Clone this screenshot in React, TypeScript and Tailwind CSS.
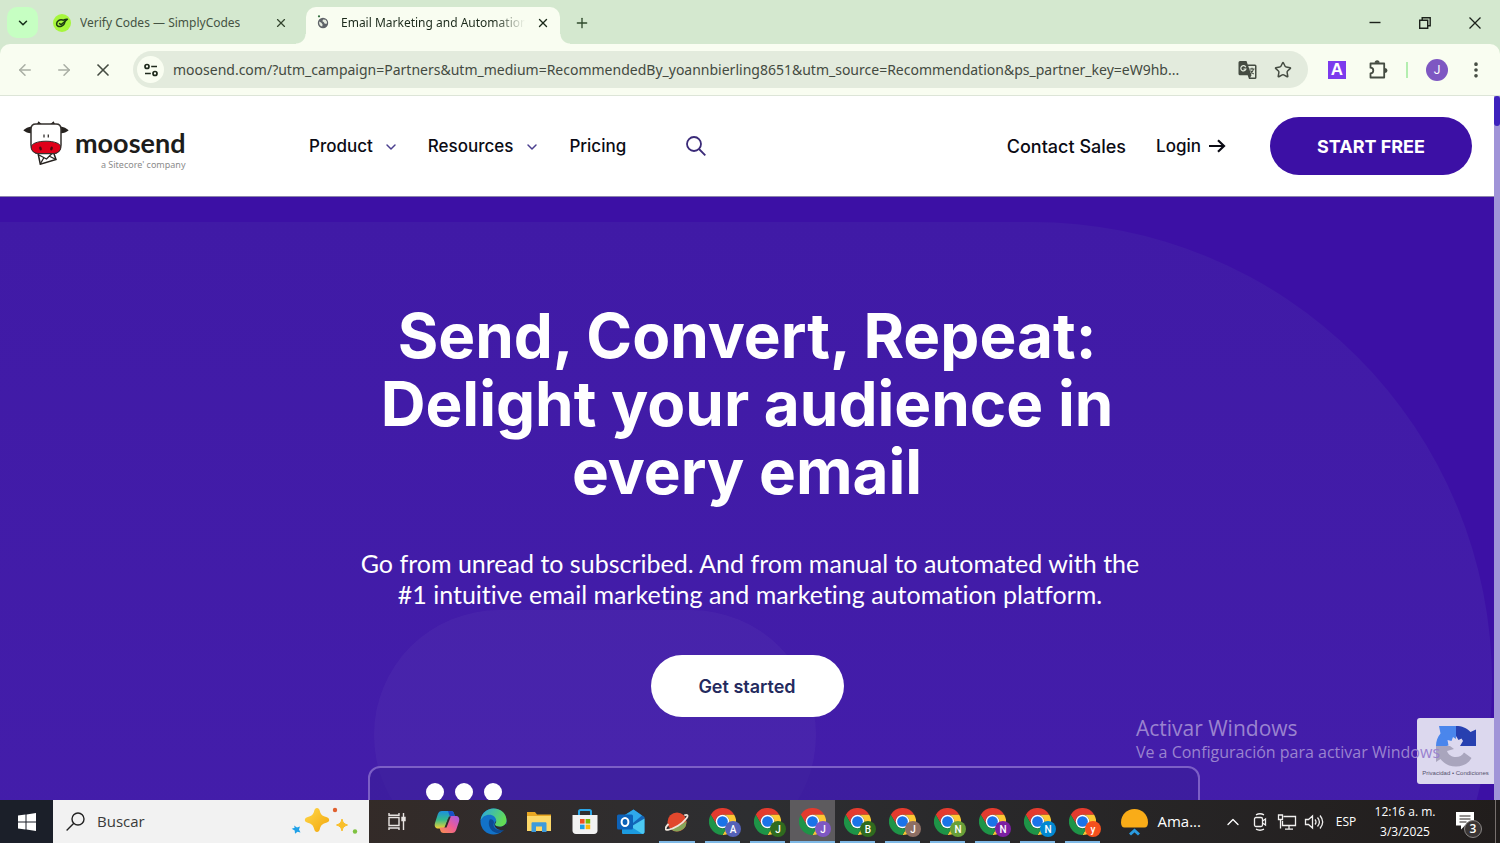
import type { ReactNode } from "react";
import { ArrowLeft, ArrowRight, ChevronDown, ChevronUp, EllipsisVertical, Plus, Star, X } from "lucide-react";

const UI = "font-['Open_Sans','Noto_Sans',sans-serif]";
const NOTO = "font-['Noto_Sans','Open_Sans',sans-serif]";
const SITE = "font-[Inter,sans-serif]";

const URL_TEXT =
  "moosend.com/?utm_campaign=Partners&utm_medium=RecommendedBy_yoannbierling8651&utm_source=Recommendation&ps_partner_key=eW9hb...";

const PROFILES = [
  { letter: "A", badge: "bg-[#5461b8]" },
  { letter: "J", badge: "bg-[#2f6b1e]" },
  { letter: "J", badge: "bg-[#7e57c2]", active: true },
  { letter: "B", badge: "bg-[#2f6b1e]" },
  { letter: "J", badge: "bg-[#8d6e63]" },
  { letter: "N", badge: "bg-[#689f38]" },
  { letter: "N", badge: "bg-[#7b1fa2]" },
  { letter: "N", badge: "bg-[#0288d1]" },
  { letter: "y", badge: "bg-[#f4511e]" },
];

/* ---------- browser chrome ---------- */

function SimplyCodesIcon() {
  return (
    <svg width="18" height="18" viewBox="0 0 18 18" fill="none" className="shrink-0">
      <circle cx="9" cy="9" r="9" fill="#a6f63c" />
      <g stroke="#1d3a12" strokeWidth="1.5" strokeLinecap="round" strokeLinejoin="round">
        <path d="M9.500 6C6.500 5.300 3.600 7.200 3.600 9.900c0 2.300 2.500 3.200 4.700 2.400 2.200-.8 3.400-2.700 3.700-4.800" />
        <path d="M6.600 9.600l1.400 1c1.800-.8 3.400-3 6.400-5.400-1.700 0-2.800.2-4 1" />
      </g>
    </svg>
  );
}

function GlobeIcon() {
  return (
    <svg width="16" height="18" viewBox="0 0 16 18" className="shrink-0">
      <circle cx="8" cy="9" r="5.200" fill="#5f6368" />
      <path d="M4.200 7.600l2.200 1.200 1.200 1.600-.4 2.200c-2-.2-3.500-2.400-3-5zM8 5.400l2.600.3 1.500 2.300-.6 2-2-.5-.8-1.500-1.300-.8z" fill="#e6ece0" />
      <circle cx="4" cy="2.300" r="1.100" fill="#2e6b3a" />
    </svg>
  );
}

function TuneIcon() {
  return (
    <svg width="16" height="16" viewBox="0 0 16 16" fill="none" stroke="#1f2a1c" strokeWidth="1.700">
      <circle cx="4" cy="4.500" r="2" />
      <path d="M8.200 4.500H14M2 11.500h5.800" />
      <circle cx="12" cy="11.500" r="2" />
    </svg>
  );
}

function TranslateIcon() {
  return (
    <svg width="20" height="20" viewBox="0 0 20 20">
      <path d="M2 1h6.500l1.200 3.500H17a1.500 1.500 0 011.500 1.500v11.500A1.500 1.500 0 0117 19h-6l-1.300-3.800H2A1.500 1.500 0 01.5 13.700V2.500A1.500 1.500 0 012 1z" fill="#454c42" />
      <path d="M10.200 6H17v11.500h-4.800l1.300-2.300z" fill="#e3ebdd" />
      <path d="M7.800 7.200A2.600 2.600 0 107.900 9H5.500" fill="none" stroke="#e3ebdd" strokeWidth="1.200" />
      <path d="M11.500 9h5M14 7.800V9M15.500 9c-.4 2-1.600 3.600-3 4.700M12.500 10.500c.6 1.400 1.900 2.700 3.200 3.500" fill="none" stroke="#454c42" strokeWidth="1.100" />
    </svg>
  );
}

function PuzzleIcon() {
  return (
    <svg width="20" height="20" viewBox="0 0 20 20" fill="none" stroke="#454c42" strokeWidth="1.800" strokeLinejoin="round">
      <path d="M2.500 3.500H16.200V17.500H2.500V13.300a2.800 2.800 0 000-5.600z" />
      <path d="M7.500 2.700a1.600 1.600 0 013.200 0M17 8.900a1.600 1.600 0 010 3.200" fill="#454c42" />
    </svg>
  );
}

function TabStrip() {
  return (
    <div className={`flex h-11 shrink-0 items-end bg-[#d4e8cf] pl-[7px] ${NOTO}`}>
      <button aria-label="Search tabs" className="mb-[6px] flex size-[31px] items-center justify-center rounded-[10px] bg-[#c6ffc2] text-[#17301a]">
        <ChevronDown size={14} strokeWidth={2.6} />
      </button>
      <div className="flex h-[37px] w-[268px] items-center pb-[5px] pl-[15px]">
        <button className="flex min-w-0 flex-1 items-center gap-[9px] text-left text-[12px] text-[#455343]">
          <SimplyCodesIcon />
          <span className="truncate">Verify Codes — SimplyCodes</span>
        </button>
        <button aria-label="Close tab" className="mr-[18px] text-[#34452f]">
          <X size={14} strokeWidth={2} />
        </button>
      </div>
      <div className="relative flex h-[37px] w-[254px] items-center rounded-t-[10px] bg-[#f9fdf1] pb-[5px] pl-[9px]">
        <span className="absolute bottom-0 -left-[10px] size-[10px] bg-[radial-gradient(circle_at_0_0,#d4e8cf_9px,#f9fdf1_10px)]" />
        <span className="absolute -right-[10px] bottom-0 size-[10px] bg-[radial-gradient(circle_at_100%_0,#d4e8cf_9px,#f9fdf1_10px)]" />
        <button className="flex min-w-0 flex-1 items-center gap-[10px] text-left text-[12px] text-[#1c2a1b]">
          <GlobeIcon />
          <span className="w-[184px] overflow-hidden whitespace-nowrap [mask-image:linear-gradient(to_right,#000_154px,transparent_184px)]">
            Email Marketing and Automation
          </span>
        </button>
        <button aria-label="Close tab" className="mr-[10px] text-[#1c2a1b]">
          <X size={14} strokeWidth={2.4} />
        </button>
      </div>
      <button aria-label="New tab" className="mb-[13px] ml-[14px] text-[#2f4a2d]">
        <Plus size={16} strokeWidth={2} />
      </button>
      <div className="mr-[17px] mb-[13px] ml-auto flex items-center gap-[34px] text-[#1c221b]">
        <button aria-label="Minimize">
          <svg width="16" height="16" viewBox="0 0 16 16" stroke="currentColor" strokeWidth="1.400">
            <path d="M2.500 7.500h11" />
          </svg>
        </button>
        <button aria-label="Restore">
          <svg width="16" height="16" viewBox="0 0 16 16" fill="none" stroke="currentColor" strokeWidth="1.400">
            <path d="M2.700 5.200h8v8h-8zM5.200 5V2.700h8v8H11" />
          </svg>
        </button>
        <button aria-label="Close">
          <svg width="16" height="16" viewBox="0 0 16 16" stroke="currentColor" strokeWidth="1.300">
            <path d="M2.500 2.500l11 11M13.500 2.500l-11 11" />
          </svg>
        </button>
      </div>
    </div>
  );
}

function Toolbar() {
  return (
    <div className="shrink-0 bg-[#d4e8cf]">
      <div className="flex h-[52px] items-center rounded-t-[10px] border-b border-[#dde5d8] bg-[#f9fdf1] pl-4">
        <button aria-label="Back" className="text-[#a9aea4]">
          <ArrowLeft size={18} strokeWidth={2} />
        </button>
        <button aria-label="Forward" className="ml-[21px] text-[#a9aea4]">
          <ArrowRight size={18} strokeWidth={2} />
        </button>
        <button aria-label="Stop loading" className="ml-[20px] text-[#454c42]">
          <X size={20} strokeWidth={2} />
        </button>
        <div className="ml-[20px] flex h-[37px] min-w-0 flex-1 items-center rounded-full bg-[#e3ebdd] pr-[16px] pl-[4px]">
          <button aria-label="Site information" className="flex size-[27px] shrink-0 items-center justify-center rounded-full bg-[#f9fdf1]">
            <TuneIcon />
          </button>
          <input
            aria-label="Address bar"
            defaultValue={URL_TEXT}
            className={`ml-[9px] min-w-0 flex-1 bg-transparent text-[14px] text-[#434a41] outline-none ${NOTO}`}
          />
          <button aria-label="Translate this page" className="ml-3">
            <TranslateIcon />
          </button>
          <button aria-label="Bookmark" className="ml-4 text-[#454c42]">
            <Star size={18} strokeWidth={2} />
          </button>
        </div>
        <button className="ml-[20px] flex size-[18px] items-center justify-center bg-[#7c3aed] font-['Liberation_Sans',sans-serif] text-[17px] leading-[18px] font-bold text-white">A</button>
        <button aria-label="Extensions" className="ml-[22px]">
          <PuzzleIcon />
        </button>
        <span className="ml-[18px] h-4 w-[2px] bg-[#b4eeb0]" />
        <button className="ml-[18px] flex size-[22px] items-center justify-center rounded-full bg-[#7e57c2] font-[Roboto,sans-serif] text-[12px] text-white">J</button>
        <button aria-label="Menu" className="mr-[14px] ml-[18px] text-[#454c42]">
          <EllipsisVertical size={20} strokeWidth={2.4} />
        </button>
      </div>
    </div>
  );
}

/* ---------- site ---------- */

function CowIcon() {
  return (
    <svg width="46" height="44" viewBox="0 0 46 44" className="shrink-0">
      <path d="M9 5.500C5 5.700 2.500 7.300.3 9.300c2.500 2.300 5.300 3 8.700 2.800zM37 5.500c4 .2 6.500 1.800 8.700 3.800-2.500 2.300-5.300 3-8.700 2.800z" fill="#26221f" />
      <path d="M14 3l1.500-2.800L18.600 3zM27.500 3l3.100-2.800L32 3z" fill="#26221f" />
      <path d="M15 32l2.300 11.200L33 38.500l-2.800-8z" fill="#fff" stroke="#26221f" strokeWidth="1.500" />
      <path d="M16 34l7.500 4 7-7M17.500 42.500l3.500-6M32 38l-6-3" fill="none" stroke="#26221f" strokeWidth="1.300" />
      <path d="M13 3h20c3 0 5 2 5 5v16c0 5-3.500 8.500-8 8.500H16c-4.500 0-8-3.500-8-8.500V8c0-3 2-5 5-5z" fill="#fff" stroke="#35312e" strokeWidth="1.500" />
      <path d="M8.300 26c0-3.500 6.500-5.800 14.700-5.800S37.700 22.500 37.700 26c0 4-3.200 6.500-7.700 6.500H16c-4.500 0-7.700-2.500-7.700-6.500z" fill="#df0019" stroke="#35312e" strokeWidth="1" />
      <ellipse cx="17.500" cy="27.500" rx="1.300" ry="2" fill="#4b0a10" transform="rotate(-15 17.500 27.500)" />
      <ellipse cx="28.500" cy="27.500" rx="1.300" ry="2" fill="#4b0a10" transform="rotate(15 28.500 27.500)" />
      <path d="M21 13.500v3M25.300 13.500v3" stroke="#35312e" strokeWidth="1.300" />
    </svg>
  );
}

function SiteHeader() {
  return (
    <header className={`flex h-[101px] items-center border-b border-[#8d84ad] bg-white pr-[22px] pl-[23px] text-[18px] font-medium text-[#0b0b14] ${SITE}`}>
      <a href="#home" className="flex w-[162px] shrink-0">
        <CowIcon />
        <span className="ml-[6px] flex flex-col items-end pt-[5px]">
          <span className="font-[Lato,sans-serif] text-[27px] leading-[33px] font-bold text-[#1d1d1b]">moosend</span>
          <span className={`text-[9px] leading-[12px] font-normal whitespace-nowrap text-[#8b8b8b] ${NOTO}`}>a Sitecore' company</span>
        </span>
      </a>
      <nav className="ml-[124px] flex items-center text-[17px] leading-[28px]">
        <button className="flex items-center gap-[10px]">
          Product
          <ChevronDown size={16} strokeWidth={2.2} className="mt-[2px] text-[#4a3f8f]" />
        </button>
        <button className="ml-[29px] flex items-center gap-[11px]">
          Resources
          <ChevronDown size={16} strokeWidth={2.2} className="mt-[2px] text-[#4a3f8f]" />
        </button>
        <a href="#pricing" className="ml-[29px]">
          Pricing
        </a>
        <button aria-label="Search" className="ml-[60px]">
          <svg width="20" height="20" viewBox="0 0 20 20" fill="none" stroke="#3a2a78" strokeWidth="1.800">
            <circle cx="8" cy="8" r="7" />
            <path d="M13 13l6.300 6.300" />
          </svg>
        </button>
      </nav>
      <div className="ml-auto flex items-center">
        <a href="#contact">Contact Sales</a>
        <a href="#login" className="ml-[30px] flex items-center gap-2 text-[17px] leading-[28px]">
          Login
          <svg width="17" height="14" viewBox="0 0 17 14" fill="none" stroke="currentColor" strokeWidth="2.200">
            <path d="M0 7h15M9 1.300L15 7l-6 5.700" />
          </svg>
        </a>
        <a href="#start" className="ml-[44px] flex h-[58px] w-[202px] items-center justify-center rounded-full bg-[#3c10a5] font-bold text-white">
          START FREE
        </a>
      </div>
    </header>
  );
}

function Recaptcha() {
  return (
    <div className="absolute right-0 bottom-[16px] flex h-[66px] w-[77px] flex-col items-center rounded-l-[3px] bg-[#dcd8ee] pt-[7px]">
      <svg width="42" height="42" viewBox="0 0 42 42">
        <path d="M21 1v13l-3-2-1.500 4-4-1 1 5.500-2 .5H1c0-4.800 1.500-9 4.500-12.500L4 1h17z" fill="#4a86ec" />
        <path d="M21 1c6 0 10.500 1.800 14.500 6L41 4.500V21H25l3-5-1.500-2.500-3 1.500L21 11z" fill="#2740b0" />
        <path d="M1 21h14l4 3-7 2c1.500 4 5 6 9 6 3.500 0 6.200-1.500 8-4.500l7.500 5.500C33.500 38.500 28 41.500 21 41.500c-6.300 0-11.700-2.500-15.500-7.500L1 37z" fill="#a9a5bd" />
      </svg>
      <span className="mt-[2px] font-['Liberation_Sans',sans-serif] text-[6px] leading-[8px] whitespace-nowrap text-[#55506b]">Privacidad • Condiciones</span>
    </div>
  );
}

function Hero() {
  return (
    <main className={`relative flex flex-1 flex-col items-center overflow-hidden bg-[#3c10a5] pt-[105px] text-white ${SITE}`}>
      <div className="absolute top-[25px] right-[2px] -left-[600px] h-[920px] rounded-[460px] bg-linear-to-b from-[#401aa6] to-[#451fac]" />
      <div className="absolute top-[413px] left-1/4 h-[250px] w-[442px] rounded-[140px] bg-white/3" />
      <h1 className="relative max-w-[780px] text-center text-[62px] leading-[68px] font-bold">
        Send, Convert, Repeat: Delight your audience in every email
      </h1>
      <p className="relative mt-[42px] ml-[6px] max-w-[800px] text-center font-[Lato,sans-serif] text-[25px] leading-[31px] [font-variant-ligatures:none]">
        Go from unread to subscribed. And from manual to automated with the
        <br />
        #1 intuitive email marketing and marketing automation platform.
      </p>
      <a href="#start" className="relative mt-[45px] flex h-[62px] w-[193px] shrink-0 items-center justify-center rounded-full bg-white text-[18px] font-semibold text-[#242a5e]">
        Get started
      </a>
      <div className="relative mt-[49px] ml-[74px] flex h-[420px] w-[832px] shrink-0 gap-[11px] rounded-[12px] border-2 border-[#7c5fc6] bg-[#3b1e98]/60 pt-[15px] pl-[56px]">
        <span className="size-[18px] rounded-full bg-white" />
        <span className="size-[18px] rounded-full bg-white" />
        <span className="size-[18px] rounded-full bg-white" />
      </div>
    </main>
  );
}

/* ---------- taskbar ---------- */

function TaskButton({ label, running, active, children }: { label: string; running?: boolean; active?: boolean; children: ReactNode }) {
  return (
    <button aria-label={label} className={`relative flex h-full flex-1 items-center justify-center ${active ? "bg-[#5d5b5e]" : ""}`}>
      {children}
      {running && <span className={`absolute bottom-0 h-[2px] bg-[#7fb9e6] ${active ? "inset-x-0" : "inset-x-[5px]"}`} />}
    </button>
  );
}

function ChromeIcon({ letter, badge }: { letter: string; badge: string }) {
  return (
    <span className="relative">
      <svg width="27" height="27" viewBox="0 0 48 48">
        <path d="M24 12H44.800A24 24 0 0 0 3.200 12L13.600 30A12 12 0 0 1 24 12Z" fill="#e33b2e" />
        <path d="M24 12H44.800A24 24 0 0 0 3.200 12L13.600 30A12 12 0 0 1 24 12Z" fill="#fcc934" transform="rotate(120 24 24)" />
        <path d="M24 12H44.800A24 24 0 0 0 3.200 12L13.600 30A12 12 0 0 1 24 12Z" fill="#1e9447" transform="rotate(240 24 24)" />
        <circle cx="24" cy="24" r="12" fill="#fff" />
        <circle cx="24" cy="24" r="9.500" fill="#1a73e8" />
      </svg>
      <span className={`absolute -right-[5px] -bottom-[2px] flex size-4 items-center justify-center rounded-full font-[Roboto,sans-serif] text-[10px] font-medium text-white ${badge}`}>
        {letter}
      </span>
    </span>
  );
}

function Sparkles() {
  return (
    <svg width="68" height="30" viewBox="0 0 68 30">
      <defs>
        <linearGradient id="gold" x1="0" y1="0" x2="1" y2="1">
          <stop offset="0" stopColor="#ffd84a" />
          <stop offset="1" stopColor="#f2a60c" />
        </linearGradient>
      </defs>
      <path d="M27 1c1.500 0 2.300 1 2.700 2.500 1 4 2.200 5.300 6.500 6.600 1.700.5 3 1.400 3 2.900s-1.300 2.300-3 2.800c-4.300 1.300-5.500 2.700-6.500 6.700-.4 1.500-1.200 2.500-2.700 2.500s-2.300-1-2.700-2.500c-1-4-2.200-5.400-6.500-6.700-1.700-.5-3-1.300-3-2.800s1.300-2.400 3-2.900c4.300-1.300 5.500-2.600 6.500-6.600C24.700 2 25.500 1 27 1z" fill="url(#gold)" />
      <path d="M52 12c.8 3.500 1.800 4.700 5.500 6-3.700 1.200-4.700 2.500-5.500 6-.8-3.500-1.800-4.800-5.500-6 3.700-1.300 4.700-2.500 5.500-6z" fill="#f9bf2c" stroke="#f9bf2c" />
      <path d="M4 18.500l3 2 3-1-1 3 1.500 3-3-.7-2.500 2-.3-3.300-3-1.800 3-.9z" fill="#1fa1e8" />
      <circle cx="45" cy="3" r="2.200" fill="#e0602f" />
      <circle cx="65" cy="24.500" r="2.200" fill="#7fc241" />
    </svg>
  );
}

function PinnedApps() {
  return (
    <div className="flex h-full w-[276px] shrink-0">
      <TaskButton label="Copilot">
        <svg width="26" height="26" viewBox="0 0 26 26">
          <defs>
            <linearGradient id="cpA" x1="0" y1="0" x2="0" y2="1">
              <stop offset="0" stopColor="#1b8fe0" />
              <stop offset=".5" stopColor="#35b98a" />
              <stop offset="1" stopColor="#f5d132" />
            </linearGradient>
            <linearGradient id="cpB" x1="1" y1="0" x2="0" y2="1">
              <stop offset="0" stopColor="#a35be8" />
              <stop offset=".5" stopColor="#ee5c95" />
              <stop offset="1" stopColor="#f9924a" />
            </linearGradient>
          </defs>
          <path d="M8 2h9c2 0 2.600 1 3.200 3l.8 3h-4c-2 0-3 1-3.500 3l-1.500 5c-.8 2.400-2 3.500-4 3.500H4.500C1.500 19.500 0 17.500 1 14l2.700-8.500C4.500 3 5.800 2 8 2z" fill="url(#cpA)" />
          <path d="M14 2h3c2 0 2.600 1 3.200 3l.8 3h-5z" fill="#1a50c8" />
          <path d="M18 24H9.500c-2 0-2.800-1-3.300-3l-.7-2.500H9c2 0 3-1 3.500-3l1.500-5c.8-2.400 2-3.500 4-3.500h3.500c3 0 4.500 2 3.500 5.500l-2.700 8C21.500 23 20.200 24 18 24z" fill="url(#cpB)" />
          <path d="M10.500 18.500l4.500-11h1.800l-4.300 11z" fill="#2d2a29" />
        </svg>
      </TaskButton>
      <TaskButton label="Edge">
        <svg width="27" height="27" viewBox="0 0 28 28">
          <defs>
            <linearGradient id="edgeTop" x1="0" y1="0" x2="1" y2=".4">
              <stop offset="0" stopColor="#27a5e6" />
              <stop offset="1" stopColor="#63dc55" />
            </linearGradient>
          </defs>
          <circle cx="14" cy="14" r="13.500" fill="#1272c8" />
          <path d="M.6 13C1.200 5.800 7 .5 14 .5c8 0 13.500 5.700 13.500 12.200 0 4.300-3 6.800-6.700 6.800-3.300 0-5.300-1.300-5.300-2.600 0-1 1.300-1.500 1.300-3.700C16.800 9.800 13.800 7 9.500 7 5.500 7 2 9.300.6 13z" fill="url(#edgeTop)" />
          <path d="M10 12c-2.500 5 .5 12.500 7 13.800 3.500.5 6.500-1 8.500-4-3 1.500-7 1.500-9.500-.5-2.200-1.800-2.500-4-1.500-6.300C14.700 13 12 10.500 10 12z" fill="#0c4a93" />
          <path d="M16.800 13.200c0 2.200-1.300 2.700-1.300 3.700 0 1.300 2 2.600 5.300 2.600 2.500 0 4.800-1.200 5.900-3.300L28 21l-4 2c-6 0-9-3-9-6 0-1.500.8-2.500 1.800-3.800z" fill="#2d2c2d" />
        </svg>
      </TaskButton>
      <TaskButton label="File Explorer">
        <svg width="26" height="22" viewBox="0 0 26 22">
          <path d="M1 1h8l2 2.500h14V8H1z" fill="#e8a723" />
          <path d="M1 5h24v15H1z" fill="#fcd869" />
          <path d="M5.500 21v-8.500c0-.8.500-1.300 1.300-1.300h12.400c.8 0 1.300.5 1.300 1.300V21H16v-5.500h-6V21z" fill="#3d9bdc" />
        </svg>
      </TaskButton>
      <TaskButton label="Microsoft Store">
        <svg width="26" height="26" viewBox="0 0 26 26">
          <path d="M7 7V2.500C7 1.700 7.700 1 8.500 1h9c.8 0 1.500.7 1.500 1.500V7" fill="none" stroke="#2ba6e8" strokeWidth="2" />
          <path d="M.5 6h25v15.500c0 2.200-1.300 3.500-3.500 3.500H4c-2.200 0-3.500-1.300-3.500-3.500z" fill="#f2f2f2" />
          <path d="M8 10h4.600v4.600H8z" fill="#f04e23" />
          <path d="M13.600 10h4.600v4.600h-4.600z" fill="#7eb900" />
          <path d="M8 15.600h4.600v4.600H8z" fill="#1f9fe4" />
          <path d="M13.600 15.600h4.600v4.600h-4.600z" fill="#fdb80a" />
        </svg>
      </TaskButton>
      <TaskButton label="Outlook">
        <svg width="28" height="26" viewBox="0 0 28 26">
          <path d="M5 8L16.500.5 27.500 8v15c0 1.200-.8 2-2 2H7c-1.200 0-2-.8-2-2z" fill="#1467b8" />
          <path d="M7 6.500L16.500.5 25 6.500 16 14z" fill="#2fa8ea" />
          <path d="M5 23l22.500-13.500V23c0 1.200-.8 2-2 2H7c-1.200 0-2-.8-2-2z" fill="#4cc9f2" />
          <path d="M5 12l20.500 13H7c-1.200 0-2-.8-2-2z" fill="#1c9be0" />
          <rect x="0" y="5.500" width="16" height="15" rx="1.500" fill="#0d62b8" />
          <ellipse cx="8" cy="13" rx="3.400" ry="4" fill="none" stroke="#fff" strokeWidth="2" />
        </svg>
      </TaskButton>
      <TaskButton label="Planet" running>
        <svg width="24" height="24" viewBox="0 0 24 24">
          <circle cx="12" cy="12" r="9.500" fill="#e2482d" />
          <path d="M21.400 11A9.500 9.500 0 015 18.300C11 17.500 17.500 14.500 21.400 11z" fill="#86a65a" />
          <path d="M3.500 14C-.5 18-.3 20.300 3 19.800c6-.9 14.500-6 18.500-11.500 2-2.800 1-4.200-2.200-3" fill="none" stroke="#efe6dc" strokeWidth="1.800" />
        </svg>
      </TaskButton>
    </div>
  );
}

function Taskbar() {
  return (
    <footer className="flex h-[43px] shrink-0 items-center bg-linear-to-r from-[#38271f] via-[#2d2e31] to-[#211d1c] text-white">
      <button aria-label="Start" className="flex h-full w-[53px] shrink-0 items-center justify-center bg-[#1b1f29]">
        <svg width="18" height="18" viewBox="0 0 18 18" fill="#fff">
          <path d="M0 2.600L7.500 1.500v7H0zM8.500 1.400L18 0v8.500H8.500zM0 9.500h7.500v7L0 15.400zM8.500 9.500H18V18l-9.500-1.400z" />
        </svg>
      </button>
      <label className="flex h-full w-[316px] shrink-0 items-center bg-[#f2f2f2] pr-[11px] pl-[13px]">
        <svg width="19" height="19" viewBox="0 0 19 19" fill="none" stroke="#222" strokeWidth="1.400" className="shrink-0">
          <circle cx="12" cy="7" r="6" />
          <path d="M7.800 11.200L.6 18.400" />
        </svg>
        <input aria-label="Buscar" placeholder="Buscar" className="ml-[12px] w-[180px] min-w-0 bg-transparent text-[15px] outline-none placeholder:text-[#3a3a3a]" />
        <span className="ml-auto shrink-0">
          <Sparkles />
        </span>
      </label>
      <button aria-label="Task view" className="flex h-full w-[55px] shrink-0 items-center justify-center">
        <svg width="20" height="20" viewBox="0 0 20 20" fill="none" stroke="#e8e4e2" strokeWidth="1.400">
          <path d="M2 5.500h10v8H2zM2 1v2.200h10V1M2 18v-2h10v2M16.500 1v17" />
          <path d="M15 5.500h3v3h-3z" fill="#e8e4e2" />
        </svg>
      </button>
      <PinnedApps />
      <div className="flex h-full w-[405px] shrink-0">
        {PROFILES.map((p, i) => (
          <TaskButton key={i} label={`Chrome profile ${p.letter}`} running active={p.active}>
            <ChromeIcon letter={p.letter} badge={p.badge} />
          </TaskButton>
        ))}
      </div>

      <div className="ml-auto flex h-full shrink-0 items-center">
        <button className="flex items-center gap-[9px] text-[15px]">
          <svg width="27" height="28" viewBox="0 0 27 28">
            <path d="M0 14.500C0 6.500 6 1 13.500 1S27 6.500 27 14.500c0 3-1.200 5-3.500 5h-20c-2.300 0-3.500-2-3.500-5z" fill="#f9ac18" />
            <path d="M9 26.500l4.500-4 4.500 4" fill="none" stroke="#2a9be0" strokeWidth="3" />
          </svg>
          Ama...
        </button>
        <button aria-label="Show hidden icons" className="ml-[22px]">
          <ChevronUp size={20} strokeWidth={1.600} />
        </button>
        <svg width="16" height="20" viewBox="0 0 16 20" fill="none" stroke="#f0efee" strokeWidth="1.300" className="ml-[9px]">
          <rect x="2.500" y="5.500" width="8" height="9" rx="1.500" />
          <path d="M10.500 9l3-2v6l-3-2M4 2.800c2.500-1.300 5.500-1.300 8 0M4 17.200c2.500 1.300 5.500 1.300 8 0" />
        </svg>
        <svg width="20" height="18" viewBox="0 0 20 18" fill="none" stroke="#f0efee" strokeWidth="1.300" className="ml-[9px]">
          <path d="M6.500 3.500h12v9h-13V8M12 12.500V16M8 16.200h8M1.500 2h4v4.500h-4zM3.500 6.500v9" />
        </svg>
        <svg width="20" height="18" viewBox="0 0 20 18" fill="none" stroke="#f0efee" strokeWidth="1.300" className="ml-[7px]">
          <path d="M1.500 6.500h3L8.500 3v12l-4-3.500h-3zM11 6.500c1.200 1.500 1.200 3.500 0 5M13.500 4.500c2.300 2.700 2.300 6.300 0 9M16 2.500c3.300 4 3.300 9 0 13" />
        </svg>
        <button className="ml-[11px] w-[22px] text-[12px]">ESP</button>
        <div className="ml-[15px] w-[66px] text-center text-[12px] leading-[20px] whitespace-nowrap">
          <div>12:16 a. m.</div>
          <div>3/3/2025</div>
        </div>
        <button className="relative ml-[18px] size-[28px]" aria-label="3 notifications">
          <svg width="19" height="18" viewBox="0 0 19 18" className="mt-[-2px]">
            <path d="M0 0h18v13.500H9L5 17.500v-4H0z" fill="#fff" />
            <path d="M3.500 4h11M3.500 7h11M3.500 10h7" stroke="#2a2423" strokeWidth="1.100" />
          </svg>
          <span className="absolute right-[2px] bottom-[-2px] flex size-[18px] items-center justify-center rounded-full border border-[#8a8786] bg-[#3a3534] text-[12px] font-semibold">3</span>
        </button>
        <span className="mr-[4px] ml-[11px] h-full w-px bg-[#77706e]" />
      </div>
    </footer>
  );
}

export default function App() {
  return (
    <div className={`flex h-screen flex-col overflow-hidden ${UI}`}>
      <TabStrip />
      <Toolbar />
      <div className="relative flex min-h-0 flex-1">
        <div className="relative flex min-w-0 flex-1 flex-col overflow-hidden">
          <SiteHeader />
          <Hero />
          <Recaptcha />
        </div>
        <div className="w-[6px] shrink-0 bg-[#a094d8]">
          <div className="h-[30px] rounded-full bg-[#3d22bd]" />
        </div>
        <div className="pointer-events-none absolute right-[60px] bottom-[37px] text-[#9a83cf]">
          <div className="text-[21px] leading-[26px]">Activar Windows</div>
          <div className="text-[16px] leading-[22px]">Ve a Configuración para activar Windows</div>
        </div>
      </div>
      <Taskbar />
    </div>
  );
}
